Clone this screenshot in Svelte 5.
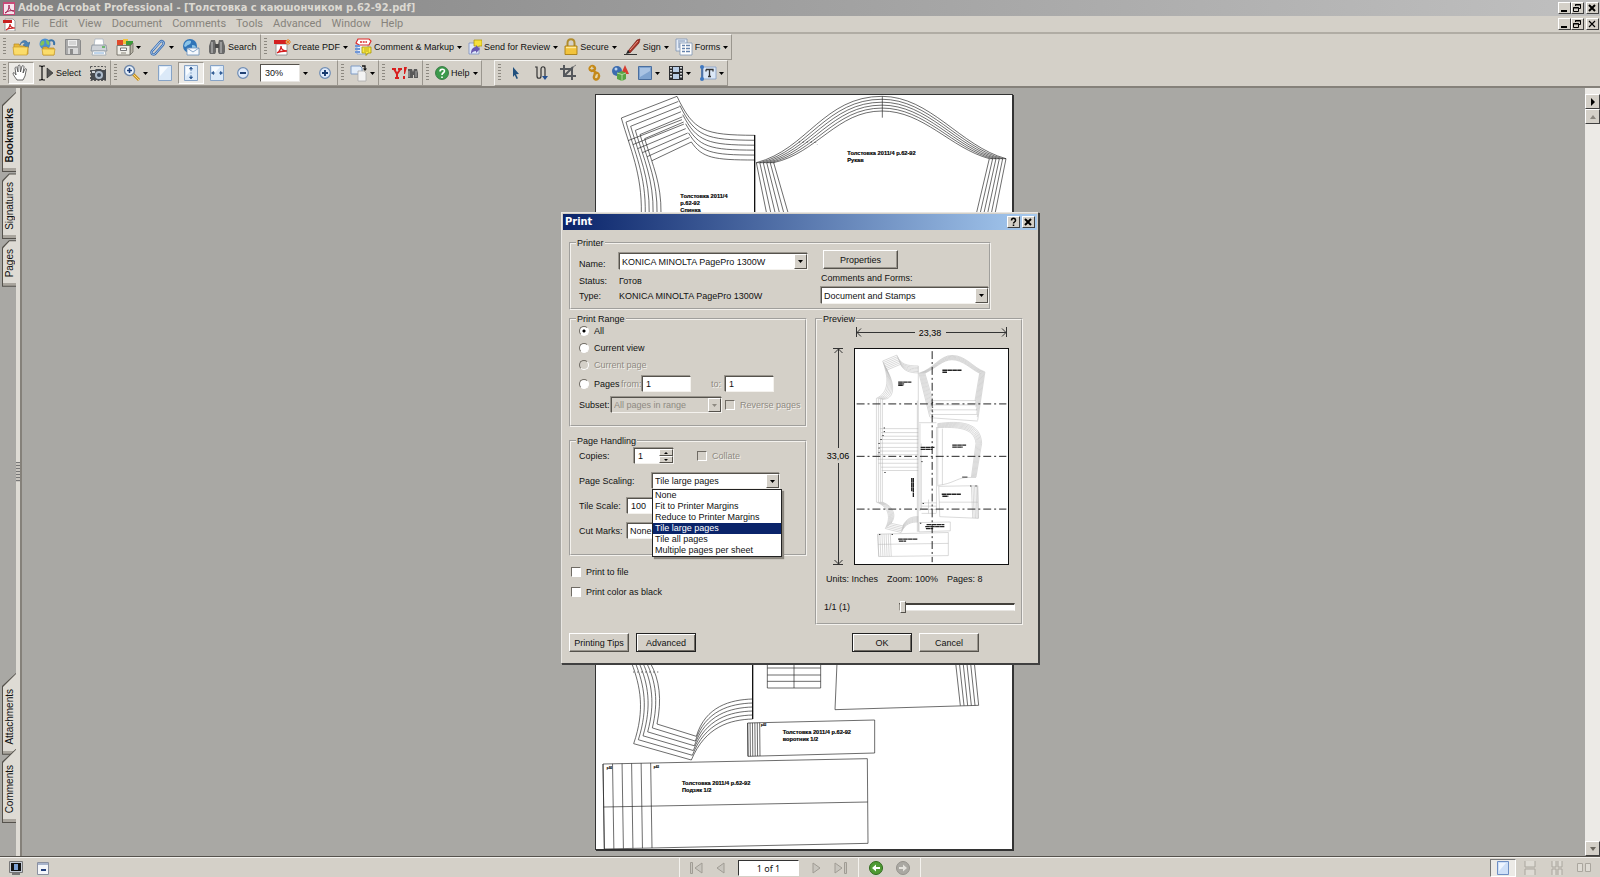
<script lang="ts">
  type Point = number[];
  type Tool = { icon: string; label?: string; menu?: boolean; pressed?: boolean; w?: number; zoom?: boolean };

  const menus = ['File', 'Edit', 'View', 'Document', 'Comments', 'Tools', 'Advanced', 'Window', 'Help'];

  const fileBars: Tool[][] = [
    [
      { icon: 'open' },
      { icon: 'openweb' },
      { icon: 'save' },
      { icon: 'print' },
      { icon: 'organizer', menu: true },
      { icon: 'clip', menu: true },
      { icon: 'mail' },
      { icon: 'search', label: 'Search' },
    ],
    [
      { icon: 'pdf', label: 'Create PDF', menu: true },
      { icon: 'comment', label: 'Comment & Markup', menu: true },
      { icon: 'review', label: 'Send for Review', menu: true, w: 14 },
      { icon: 'lock', label: 'Secure', menu: true, w: 14 },
      { icon: 'pen', label: 'Sign', menu: true },
      { icon: 'forms', label: 'Forms', menu: true },
    ],
  ];

  const viewBars: Tool[][] = [
    [
      { icon: 'hand', pressed: true },
      { icon: 'select', label: 'Select', w: 16 },
      { icon: 'camera' },
    ],
    [
      { icon: 'zoom', menu: true },
      { icon: 'page' },
      { icon: 'fitpage', pressed: true },
      { icon: 'fitwidth' },
      { icon: 'minus' },
      { icon: '', zoom: true, menu: true },
      { icon: 'plus' },
    ],
    [{ icon: 'rotate', menu: true }],
    [{ icon: 'yahoo', w: 28 }],
    [{ icon: 'help', label: 'Help', menu: true, w: 14 }],
    [
      { icon: 'arrow' },
      { icon: 'article' },
      { icon: 'crop' },
      { icon: 'link' },
      { icon: 'shapes' },
      { icon: 'square', menu: true, w: 16 },
      { icon: 'film', menu: true, w: 16 },
      { icon: 'text', menu: true },
    ],
  ];

  const topTabs = ['Bookmarks', 'Signatures', 'Pages'];
  const bottomTabs = ['Attachments', 'Comments'];

  const scalings = [
    'None',
    'Fit to Printer Margins',
    'Reduce to Printer Margins',
    'Tile large pages',
    'Tile all pages',
    'Multiple pages per sheet',
  ];

  let scaling = $state('Tile large pages');
  let range = $state('all');
  let zoom = $state('30%');
  let sheet = $state(0);

  // Pattern sizes: every outline between the largest and the smallest one.
  // Two points make a line, four make a cubic, seven make two joined cubics.
  function grade(a: Point[], b: Point[], steps = 6) {
    let d = '';
    for (let i = 0; i < steps; i++) {
      const t = i / (steps - 1);
      const p = a.map(([x, y], k) => `${(x + (b[k][0] - x) * t).toFixed(1)} ${(y + (b[k][1] - y) * t).toFixed(1)}`);
      d += `M${p[0]}${p.length === 2 ? 'L' : 'C'}${p.slice(1).join(' ')}`;
    }
    return d;
  }

  const pageLines = [
    // front, shoulder and neck
    grade([[93, 85], [260, 20]], [[163, 147], [280, 97]]),
    grade([[113, 153], [275, 90]], [[185, 213], [303, 157]]),
    grade([[93, 85], [120, 180], [155, 250], [153, 372]], [[163, 147], [188, 230], [213, 280], [212, 372]]),
    grade([[260, 20], [310, 125], [340, 136], [493, 137]], [[303, 157], [335, 205], [370, 211], [493, 211]]),
    // sleeve
    grade(
      [[498, 219], [650, 180], [700, 20], [875, 20], [1020, 20], [1110, 170], [1247, 207]],
      [[550, 219], [680, 190], [740, 64], [875, 64], [1000, 64], [1080, 175], [1197, 207]],
    ),
    grade([[498, 219], [529, 372]], [[550, 219], [594, 372]]),
    grade([[1247, 207], [1214, 372]], [[1197, 207], [1158, 372]]),
    'M498 219H552M1197 207H1247M876 20V84',
    // lower armhole and neck
    grade([[124, 1720], [150, 1790], [165, 1860], [130, 1962]], [[180, 1720], [208, 1770], [215, 1830], [200, 1903]]),
    grade([[130, 1962], [303, 2011]], [[200, 1903], [318, 1940]]),
    grade([[303, 2011], [345, 1910], [420, 1890], [487, 1888]], [[318, 1940], [345, 1850], [420, 1830], [487, 1828]]),
    // small grid and hood edge
    'M531 1720V1795H691V1720M531 1735H691M531 1756H691M531 1775H691M611 1720V1795',
    'M740 1720L734 1860 1165 1847',
    grade([[1096, 1720], [1110, 1848]], [[1152, 1720], [1165, 1847]]),
    // collar
    'M472 1900L853 1891V1990L473 2000Z',
    grade([[472, 1900], [473, 2000]], [[508, 1899], [509, 1999]]),
    // facing
    'M38 2023L831 2007 833 2261 42 2278ZM40 2152L832 2137',
    grade([[38, 2023], [42, 2278]], [[181, 2020], [185, 2275]]),
  ];

  const previewLines = [
    grade([[247, 450], [290, 432]], [[258, 478], [301, 460]], 7),
    grade([[290, 432], [300, 460], [320, 465], [355, 465]], [[301, 460], [310, 480], [330, 486], [355, 486]]),
    grade([[247, 450], [265, 500], [268, 545], [228, 563]], [[260, 478], [285, 520], [285, 568], [245, 566]]),
    grade([[228, 563], [228, 878]], [[246, 566], [246, 878]], 4),
    grade([[228, 878], [262, 890], [275, 920], [255, 958]], [[246, 878], [280, 890], [290, 920], [272, 942]]),
    grade([[255, 958], [303, 970]], [[272, 942], [308, 950]], 5),
    grade([[303, 970], [315, 942], [335, 938], [355, 938]], [[308, 950], [320, 926], [335, 922], [355, 922]]),
    'M238 655H355M242 667H355M242 678H355M240 688H355M238 699H355M236 712H355M232 723H355M230 734H355M232 748H355M234 760H355M242 772H355M244 782H355',
    'M355 465V968M352 570V968',
    grade(
      [[357, 487], [400, 475], [420, 433], [457, 433], [500, 433], [520, 470], [557, 483]],
      [[375, 487], [410, 470], [430, 446], [457, 446], [490, 446], [515, 475], [541, 487]],
    ),
    grade([[357, 487], [390, 620]], [[375, 487], [399, 570]], 7),
    grade([[557, 483], [535, 630]], [[541, 487], [527, 570]], 7),
    'M393 570H530M393 583H532M393 598H533M392 612H534M392 622L535 632M357 637H410',
    'M360 640V905M364 700V900M410 650V910M414 650V830M428 655V825M365 880H410M365 890H410M365 900H410M365 912H410M386 870V912',
    grade([[413, 640], [480, 630], [545, 635], [547, 700]], [[413, 652], [470, 650], [525, 650], [530, 700]]),
    grade([[547, 700], [530, 802]], [[530, 700], [516, 802]]),
    'M415 827C460 822 470 806 500 803H530',
    'M417 830L535 828 537 927 420 922ZM418 878H536',
    grade([[516, 829], [520, 926]], [[535, 828], [537, 927]], 5),
    'M357 940L452 938V965L357 968Z',
    'M232 975L446 970V1040L235 1043ZM233 1006L446 1003',
    grade([[232, 975], [235, 1043]], [[270, 974], [273, 1042]], 7),
  ];
</script>

{#snippet icon(name: string, w = 18)}
  <svg class="icon" width={w} height="18" viewBox="0 0 {w} 18" aria-hidden="true">
    {#if name === 'open'}
      <path d="M2 6h5l1 2h8v8H2z" fill="#e9b93a" stroke="#b98a1c" stroke-width=".7" />
      <path d="M8 7c1-5 6-6 8-2l2-1-2 6-5-3 2-1c-1-2-3-2-5 1z" fill="#4a84b8" stroke="#265a8c" stroke-width=".5" />
      <path d="M1 9h15l-1 8H2z" fill="#fbdc6a" stroke="#c99b28" stroke-width=".7" />
    {:else if name === 'openweb'}
      <circle cx="7" cy="6" r="5.5" fill="#4b8fd0" />
      <path d="M3 4c3-3 4 0 3 2s-3 2-4 1zM8 2c3 0 4 3 3 5-2 0-3-2-3-5z" fill="#7fc35b" />
      <path d="M11 3c3-2 6 0 5 4" fill="none" stroke="#3b74a8" stroke-width="2" />
      <path d="M5 9h4l1 1h6v7H5z" fill="#e9b93a" stroke="#b98a1c" stroke-width=".7" />
      <path d="M4 11h13l-1 6H5z" fill="#fbdc6a" stroke="#c99b28" stroke-width=".7" />
    {:else if name === 'save'}
      <path d="M1.500 1.500h14l1 1v14h-15z" fill="#a9a9a9" stroke="#8a8a8a" />
      <path d="M4 2h9v6H4z" fill="#eee" />
      <path d="M5 4h7M5 6h7" stroke="#bbb" />
      <path d="M4 10h10v6H4z" fill="#d8d8d8" />
      <path d="M6 11h3v5H6z" fill="#8c8c8c" />
    {:else if name === 'print'}
      <path d="M5 1h8l1 7H4z" fill="#fff" stroke="#a8b4c0" stroke-width=".8" />
      <path d="M2 7h14l1 6H1z" fill="#cfd3d8" stroke="#87909a" stroke-width=".8" />
      <path d="M3 13h12l1 4H2z" fill="#fff" stroke="#9aa4ae" stroke-width=".8" />
      <path d="M4 15h10" stroke="#7eaad6" /><path d="M12 9h3" stroke="#4fae4f" stroke-width="1.500" />
    {:else if name === 'organizer'}
      <path d="M1 2h6v5H1z" fill="#e04a2a" /><path d="M7 1h5v5H7z" fill="#f3c33a" /><path d="M10 3h7v5h-7z" fill="#3e9a3a" />
      <path d="M14 8l3-3v9l-3 3z" fill="#b8b4a8" stroke="#6f6c62" stroke-width=".8" />
      <path d="M1 7.500h13V17H1z" fill="#efeee8" stroke="#6f6c62" stroke-width=".9" />
      <path d="M4.500 10h6v2.500h-6z" fill="#fff" stroke="#555" stroke-width=".8" /><path d="M5 15h5" stroke="#8a867a" />
    {:else if name === 'clip'}
      <path d="M4 12l7-8c2-2 5 0 3 3l-7 8c-2 3-6 1-4-2l8-9" fill="none" stroke="#3a6db0" stroke-width="2.400" />
      <path d="M4 12l7-8c2-2 5 0 3 3l-7 8c-2 3-6 1-4-2l8-9" fill="none" stroke="#b6d2f2" stroke-width=".8" />
    {:else if name === 'mail'}
      <circle cx="8" cy="8" r="7" fill="#2f74b8" /><path d="M3 5c2-3 5-3 6-2 0 3-1 3-3 4s-2 3-4 1zM10 7c3 0 4 1 4 3h-4z" fill="#8cc4e8" />
      <path d="M5 10h12v7H5z" fill="#f6f9fd" stroke="#6a8fb8" stroke-width=".8" /><path d="M5 10l6 4 6-4" fill="none" stroke="#6a8fb8" stroke-width=".8" />
    {:else if name === 'search'}
      <path d="M3 2h4l1 4v8l-1 2H2l-1-2V8zM11 2h4l2 6v6l-1 2h-5l-1-2V6z" fill="#6a6a6a" /><path d="M7 6h4v4H7z" fill="#4a4a4a" />
      <path d="M4 4v11M13 4v11" stroke="#b4b4b4" stroke-width="1.300" />
    {:else if name === 'pdf'}
      <path d="M3 6h11v11H3z" fill="#fff" stroke="#888" stroke-width=".8" /><path d="M1 2h12v4H1z" fill="#d42020" />
      <path d="M4 15c3-2 4-5 4-7 0 4 3 5 6 5-4 0-7 0-10 2z" fill="none" stroke="#d42020" stroke-width="1.300" />
      <path d="M15 1v6M12 4h6M13 2l4 4M17 2l-4 4" stroke="#e87c24" />
    {:else if name === 'comment'}
      <path d="M3 3h11v13H3z" fill="#e9f0fa" stroke="#7e9fd0" stroke-width=".8" />
      <path d="M4 1h11l2 2-2 4H5L2 5z" fill="#fff" stroke="#dd2b2b" stroke-width="1.200" />
      <path d="M6 4h7" stroke="#dd2b2b" stroke-width="1.500" stroke-dasharray="2 .7" /><path d="M1 8h5M1 11h5M1 14h5" stroke="#6f96d8" stroke-width="2" />
      <path d="M8 9h9v6h-3l-2 2.500V15H8z" fill="#f7e94a" stroke="#a99400" stroke-width=".8" /><path d="M10 11h5M10 13h5" stroke="#a99400" stroke-width=".7" />
    {:else if name === 'review'}
      <path d="M1 5h10v11H1z" fill="#dfe8f8" stroke="#7b8fc0" stroke-width=".8" /><path d="M6 2h8v6h-3l-3 2V8H6z" fill="#f6e03a" stroke="#a99400" stroke-width=".7" />
      <path d="M3 16c0-5 2-7 5-7V7l4 4-4 4v-2c-2 0-4 1-5 3z" fill="#6a5bb0" />
    {:else if name === 'lock'}
      <path d="M3.500 8V5c0-5 7-5 7 0v3" fill="none" stroke="#b08c2c" stroke-width="2" />
      <path d="M1 8h12v8.500H1z" fill="#f2c33c" stroke="#a87d14" stroke-width=".9" /><path d="M2 9.500h10" stroke="#fdeaa0" stroke-width="1.400" />
    {:else if name === 'pen'}
      <path d="M5 13L14 2l3-1-1 4-9 10z" fill="#a83226" stroke="#6d1a12" stroke-width=".6" /><path d="M7 12l8-9" stroke="#e49a8c" />
      <path d="M5 12l2 3-4 1z" fill="#222" /><path d="M1 16.500h13" stroke="#333" />
    {:else if name === 'forms'}
      <path d="M1 1h11v12H1z" fill="#e6edf7" stroke="#7f94b4" stroke-width=".8" /><path d="M5 5h12v12H5z" fill="#fff" stroke="#7f94b4" stroke-width=".8" />
      <path d="M3 3h7M3 5h2M3 7h2M3 9h2" stroke="#7f94b4" /><path d="M7 7.500h3M11 7.500h4M7 10.500h3M11 10.500h4M7 13.500h3M11 13.500h4" stroke="#6784ad" stroke-width="1.300" />
    {:else if name === 'hand'}
      <path d="M5 16C3 13 1 11 1 9c1-1 2 0 3 2L3 4c1-2 2-1 2 0l1 4V2c1-1.500 2-1 2 0l.5 6L10 2c1-1 2 0 2 1l-1 6 2-4c1-1 2 0 1 2l-1 5-2 4z" fill="#fff" stroke="#444" stroke-width=".8" />
    {:else if name === 'select'}
      <path d="M1 2h2l1 1 1-1h2M4 3v12M1 16h2l1-1 1 1h2" fill="none" stroke="#111" stroke-width="1.200" /><path d="M9 4v10l6-5z" fill="#555" stroke="#222" stroke-width=".6" />
    {:else if name === 'camera'}
      <path d="M1.500 2.500h15v14h-15z" fill="none" stroke="#555" stroke-dasharray="2 1.500" /><path d="M2 6h4l1-1h5l1 1h4v10H2z" fill="#474b50" />
      <circle cx="10" cy="11" r="4" fill="#aebccb" /><circle cx="10" cy="11" r="2" fill="#39475a" /><path d="M3 7h3v2H3z" fill="#cfd4d9" />
    {:else if name === 'zoom'}
      <path d="M9 9l7 7" stroke="#c99020" stroke-width="3" /><path d="M9 9l7 7" stroke="#f8dd7a" />
      <circle cx="6.500" cy="6.500" r="5" fill="#e8f1fb" stroke="#6d86a8" stroke-width="1.400" /><path d="M6.500 4v5M4 6.500h5" stroke="#1a3c78" stroke-width="1.600" />
    {:else if name === 'page' || name === 'fitpage' || name === 'fitwidth'}
      <path d="M2.500 1.500h13v15h-13z" fill="#dbe9f8" stroke="#86a3c6" /><path d="M4 3h8L4 12z" fill="#f7fbff" />
      {#if name === 'fitpage'}<path d="M9 3l1.500 2h-3zM9 15l1.500-2h-3zM9 5v2M9 11v2M9 8.500v1" fill="#2a5590" stroke="#2a5590" stroke-width=".8" />{/if}
      {#if name === 'fitwidth'}<path d="M3.500 9l2-1.500v3zM14.500 9l-2-1.500v3zM5 9h2M11 9h2" fill="#2a5590" stroke="#2a5590" stroke-width=".8" />{/if}
    {:else if name === 'minus' || name === 'plus'}
      <circle cx="9" cy="9" r="5.300" fill="#dfeafa" stroke="#6f8db5" stroke-width="1.200" /><path d={name === 'plus' ? 'M9 6v6M6 9h6' : 'M6 9h6'} stroke="#16396f" stroke-width="1.900" />
    {:else if name === 'rotate'}
      <path d="M1 2h9l2 2v6H1z" fill="#e2ecf8" stroke="#7f9bc4" /><path d="M8 7h6l2 2v8H8z" fill="#f3f3f3" stroke="#aaa" stroke-width=".8" />
      <path d="M12 2h3v3" fill="none" stroke="#111" stroke-width="1.300" /><path d="M13 4.500h4L15 7z" fill="#111" />
    {:else if name === 'yahoo'}
      <path d="M1 5h4M7 5h4M3 5l3 5v4M9.500 5L6 10M4 14h4" fill="none" stroke="#d81e1e" stroke-width="2" /><path d="M13 3h3l-2 7h-1zM12 12h2v3h-2z" fill="#d81e1e" />
      <path d="M17 5h4l1 3 1-3h3l1 4v5h-4v-3h-1v3h-5V9z" fill="#5a5a5a" /><path d="M18 7v6M25 7v6" stroke="#aaa" />
    {:else if name === 'help'}
      <circle cx="7" cy="9" r="6.500" fill="#3c9a4c" stroke="#2a6f38" stroke-width=".8" /><path d="M5 7.500c0-3 4.500-3 4.500-.5 0 2-2.500 1.500-2.500 4M7 12.500v1.500" fill="none" stroke="#fff" stroke-width="1.600" />
    {:else if name === 'arrow'}
      <path d="M6 3l6 7-3 .2 2 4-1.500.8-1.800-4L6 13z" fill="#1f4f7d" />
    {:else if name === 'article'}
      <path d="M2 3h2v9c0 3 4 3 4 0V5c0-3 4-3 4 0v8" fill="none" stroke="#333" stroke-width="1.200" /><path d="M9 12h6l-3 4z" fill="#234f90" />
    {:else if name === 'crop'}
      <path d="M1 5h12v11M5 1v11h12M6 11l8-8" fill="none" stroke="#55585c" stroke-width="2" /><path d="M14 3l3-2" stroke="#777" />
    {:else if name === 'link'}
      <path d="M6 2.500c2-1.500 5 1 3.500 3.500l-3 1C4 6 4 4 6 2.500zM8 6l4 4" fill="none" stroke="#c4891a" stroke-width="2.400" /><path d="M10 9c3-1 5 2 3.500 5-2 3-6 1-4-3z" fill="none" stroke="#c4891a" stroke-width="2.400" /><path d="M7 2.500L5.500 5M12.500 10l-2 4" stroke="#fbe08a" />
    {:else if name === 'shapes'}
      <circle cx="6" cy="7" r="5" fill="#3c6cae" /><circle cx="5" cy="5" r="1.500" fill="#b9d3f0" /><path d="M14 1l4 9h-8z" fill="#d83c30" />
      <path d="M6 9l5-2 4 2v6l-4 2-5-2z" fill="#58a444" /><path d="M6 9l5 1.500V17M11 10.500L15 9" fill="none" stroke="#c8e6b8" stroke-width=".8" />
    {:else if name === 'square'}
      <path d="M1.500 2.500h13v13h-13z" fill="#7fa3cf" stroke="#4a6e9e" /><path d="M3 4h10v3L3 13z" fill="#a9c3e3" />
    {:else if name === 'film'}
      <path d="M1 2h14v14H1z" fill="#2b2d30" /><path d="M5 3h6v5H5zM5 10h6v5H5z" fill="#b8cce4" /><path d="M3 3v12M13 3v12" stroke="#fff" stroke-width="1.600" stroke-dasharray="1.500 1.500" />
    {:else if name === 'text'}
      <path d="M4 3h13v12H4z" fill="#dbe7f6" stroke="#7f9bc4" stroke-width=".8" /><path d="M3 2v14" stroke="#24569c" stroke-width="1.400" /><circle cx="3" cy="3" r="2" fill="#3f78c0" /><circle cx="3" cy="15" r="2" fill="#3f78c0" />
      <path d="M7 5.500h7v2M7 7.500v-2M10.500 5.500v7M9 12.500h3" fill="none" stroke="#333" stroke-width="1.300" />
    {/if}
  </svg>
{/snippet}

{#snippet caret()}
  <svg class="caret" width="5" height="3" viewBox="0 0 5 3" aria-hidden="true"><path d="M0 0h5L2.500 3z" /></svg>
{/snippet}

{#snippet winIcon(kind: string)}
  <svg width="11" height="10" viewBox="0 0 11 10" aria-hidden="true">
    {#if kind === 'min'}
      <path d="M2 8h6" stroke="#000" stroke-width="2" />
    {:else if kind === 'restore'}
      <path d="M3.500 3V1.500h5v4H7M3 2h6M1.500 4.500h5v4h-5zM1 5h6" fill="none" stroke="#000" />
    {:else if kind === 'help'}
      <path d="M3.500 3.500c0-3 4-3 4 0 0 1.500-2 1.500-2 3M5.500 7.500V9" fill="none" stroke="#000" stroke-width="1.500" />
    {:else}
      <path d="M2 2l6 6M8 2L2 8" stroke="#000" stroke-width={kind === 'thin' ? 1.200 : 2} />
    {/if}
  </svg>
{/snippet}

{#snippet bar(tools: Tool[], tight = false)}
  <div class="bar" role="toolbar">
    <span class="grip"></span>
    <div class="tools" class:tight>
      {#each tools as tool}
        {#if tool.zoom}
          <span class="zoombox">
            <input aria-label="Zoom" bind:value={zoom} />
            <button class="tool" aria-label="Zoom levels">{@render caret()}</button>
          </span>
        {:else}
          <button class="tool" class:pressed={tool.pressed} aria-label={tool.label ?? tool.icon}>
            {@render icon(tool.icon, tool.w)}
            {#if tool.label}<span class="label">{tool.label}</span>{/if}
            {#if tool.menu}{@render caret()}{/if}
          </button>
        {/if}
      {/each}
    </div>
  </div>
{/snippet}

{#snippet tab(name: string, active = false)}
  <button class="tab" class:active>
    <span class="face"><span class="name">{name}</span></span>
  </button>
{/snippet}

{#snippet drop()}
  <span class="drop">{@render caret()}</span>
{/snippet}

<div class="app">
  <header class="titlebar">
    <svg width="12" height="13" viewBox="0 0 12 13" aria-hidden="true">
      <path d="M0 0h12v13H0z" fill="#c84a78" /><path d="M1 2h10v10H1z" fill="#f4e4ec" /><path d="M2 11c4-2 4-6 4-8 0 4 2 6 5 6-4-1-6 0-9 2z" fill="none" stroke="#a02050" />
    </svg>
    <h1>Adobe Acrobat Professional - [Толстовка с каюшончиком р.62-92.pdf]</h1>
    <div class="winbtns">
      <button aria-label="Minimize">{@render winIcon('min')}</button>
      <button aria-label="Restore">{@render winIcon('restore')}</button>
      <button class="close" aria-label="Close">{@render winIcon('close')}</button>
    </div>
  </header>

  <nav class="menubar">
    <svg width="13" height="13" viewBox="0 0 13 13" aria-hidden="true">
      <path d="M2 1h8l2 2v10H2z" fill="#fff" stroke="#888" stroke-width=".8" /><path d="M0 2h9v3H0z" fill="#c81e1e" /><path d="M3 12c4-2 4-4 4-6 0 3 2 4 5 4-4 0-6 0-9 2z" fill="none" stroke="#c81e1e" stroke-width="1.200" />
    </svg>
    {#each menus as menu}
      <button class="menu">{menu}</button>
    {/each}
    <div class="winbtns">
      <button aria-label="Minimize document">{@render winIcon('min')}</button>
      <button aria-label="Restore document">{@render winIcon('restore')}</button>
      <button class="close" aria-label="Close document">{@render winIcon('thin')}</button>
    </div>
  </nav>

  <div class="bars">
    {#each fileBars as tools, i}{@render bar(tools, i === 1)}{/each}
  </div>
  <div class="bars views">
    {#each viewBars as tools}{@render bar(tools)}{/each}
  </div>

  <main class="workspace">
    <aside class="rail">
      <div>
        {#each topTabs as name, i}{@render tab(name, i === 0)}{/each}
      </div>
      <div class="lower">
        {#each bottomTabs as name}{@render tab(name)}{/each}
      </div>
    </aside>
    <div class="splitter"><span></span></div>

    <section class="canvas">
      <svg class="sheet" width="418" height="756" viewBox="14 13 1254 2268">
        {#each pageLines as d}<path {d} />{/each}
        <path d="M493 136V372M487 1720V1888" class="heavy" />
        <path d="M625 157H675L682 166M128 1747H206" class="dots" />
        <text x="270" y="324">Толстовка 2011/4<tspan x="270" dy="22">р.62-92</tspan><tspan x="270" dy="22">Спинка</tspan></text>
        <text x="771" y="195">Толстовка 2011/4 р.62-92<tspan x="771" dy="22">Рукав</tspan></text>
        <text x="577" y="1933">Толстовка 2011/4 р.62-92<tspan x="577" dy="22">воротник 1/2</tspan></text>
        <text x="275" y="2085">Толстовка 2011/4 р.62-92<tspan x="275" dy="22">Подзяк 1/2</tspan></text>
        <text x="512" y="1908" class="tiny">р.62</text>
        <text x="49" y="2039" class="tiny">р.92</text>
        <text x="190" y="2035" class="tiny">р.62</text>
      </svg>
    </section>

    <div class="scrollbar">
      <span class="nub"></span>
      <button aria-label="Show how-to"><svg width="6" height="8" viewBox="0 0 6 8"><path d="M1 0v8l4-4z" /></svg></button>
      <button aria-label="Scroll up"><svg width="6" height="4" viewBox="0 0 6 4"><path d="M0 4h6L3 0z" fill="#8a867e" /></svg></button>
      <span class="track"></span>
      <button aria-label="Scroll down"><svg width="6" height="4" viewBox="0 0 6 4"><path d="M0 0h6L3 4z" fill="#6a665e" /></svg></button>
    </div>

    <div class="dialog" role="dialog" aria-labelledby="print-title">
      <div class="caption">
        <h2 id="print-title">Print</h2>
        <div class="winbtns">
          <button aria-label="Help">{@render winIcon('help')}</button>
          <button class="close" aria-label="Close dialog">{@render winIcon('close')}</button>
        </div>
      </div>

      <form class="body" onsubmit={(e) => e.preventDefault()}>
        <fieldset class="printer">
          <legend>Printer</legend>
          <div class="details">
            <label for="printer">Name:</label>
            <span class="combo">
              <select id="printer"><option>KONICA MINOLTA PagePro 1300W</option></select>
              {@render drop()}
            </span>
            <span>Status:</span><span>Готов</span>
            <span>Type:</span><span>KONICA MINOLTA PagePro 1300W</span>
          </div>
          <div class="extras">
            <button type="button" class="btn wide">Properties</button>
            <label for="forms">Comments and Forms:</label>
            <span class="combo">
              <select id="forms"><option>Document and Stamps</option></select>
              {@render drop()}
            </span>
          </div>
        </fieldset>

        <div class="columns">
          <div class="left">
            <fieldset class="range">
              <legend>Print Range</legend>
              <label class="choice"><input type="radio" name="range" value="all" bind:group={range} />All</label>
              <label class="choice"><input type="radio" name="range" value="view" bind:group={range} />Current view</label>
              <label class="choice off"><input type="radio" name="range" value="page" bind:group={range} disabled />Current page</label>
              <div class="line">
                <label class="choice pages-from"><input type="radio" name="range" value="pages" bind:group={range} />Pages</label>
                <label class="off from" for="from">from:</label>
                <input id="from" class="field num" value="1" />
                <label class="off to" for="to">to:</label>
                <input id="to" class="field num" value="1" />
              </div>
              <div class="line subset">
                <label for="subset">Subset:</label>
                <span class="combo off">
                  <select id="subset" disabled><option>All pages in range</option></select>
                  {@render drop()}
                </span>
                <label class="choice off"><input type="checkbox" disabled />Reverse pages</label>
              </div>
            </fieldset>

            <fieldset class="handling">
              <legend>Page Handling</legend>
              <div class="line">
                <label class="w-copies" for="copies">Copies:</label>
                <span class="spin field">
                  <input id="copies" value="1" />
                  <span class="steps">
                    <button type="button" aria-label="More copies"><svg width="4" height="2" viewBox="0 0 4 2"><path d="M0 2h4L2 0z" /></svg></button>
                    <button type="button" aria-label="Fewer copies"><svg width="4" height="2" viewBox="0 0 4 2"><path d="M0 0h4L2 2z" /></svg></button>
                  </span>
                </span>
                <label class="choice off collate"><input type="checkbox" disabled />Collate</label>
              </div>
              <div class="line">
                <label class="w-scaling" for="scaling">Page Scaling:</label>
                <span class="combo scaling">
                  <select id="scaling" bind:value={scaling}>
                    {#each scalings as s}<option>{s}</option>{/each}
                  </select>
                  {@render drop()}
                  <ul class="options">
                    {#each scalings as s}
                      <li><button type="button" class:chosen={s === scaling} onclick={() => (scaling = s)}>{s}</button></li>
                    {/each}
                  </ul>
                </span>
              </div>
              <div class="line">
                <label class="w-tile" for="tile">Tile Scale:</label>
                <input id="tile" class="field num" value="100" />
              </div>
              <div class="line">
                <label class="w-tile" for="marks">Cut Marks:</label>
                <span class="combo marks">
                  <select id="marks"><option>None</option></select>
                  {@render drop()}
                </span>
              </div>
            </fieldset>

            <div class="outputs">
              <label class="choice"><input type="checkbox" />Print to file</label>
              <label class="choice"><input type="checkbox" />Print color as black</label>
            </div>
          </div>

          <fieldset class="preview">
            <legend>Preview</legend>
            <svg class="across" width="155" height="16" viewBox="0 0 155 16">
              <path d="M2.500 2v10M152.500 2v10M3 7.500h58M92 7.500h60M7 3.500l-4 4 4 4M148 3.500l4 4-4 4" />
              <text x="76" y="11">23,38</text>
            </svg>
            <svg class="down" width="32" height="217" viewBox="0 0 32 217">
              <path d="M11 .5h10M11 216.500h10M16.500 1v99M16.500 115v101M12.500 5l4-4 4 4M12.500 212l4 4 4-4" />
              <text x="16" y="111">33,06</text>
            </svg>
            <svg class="thumb" width="155" height="217" viewBox="163 414 464 651">
              {#each previewLines as d}<path {d} />{/each}
              <path class="blot" d="M294 514H334M294 519H312M294 524H310M428 478H486M428 484H442M362 712H404M362 718H398M458 705H500M458 711H490M426 854H484M428 860H446M376 952H434M380 946H434M378 958H400M294 990H352M296 996H318M340 805V862M335 805V845" />
              <path class="specks" d="M250 653h4M250 664h4M246 676h4M240 688h4M234 700h4M234 714h4M234 728h4M252 788h4M396 576h4M396 590h4M396 604h4M396 618h4M364 755h4M368 882h4M236 976h4M274 976h4M360 942h4M512 829h4M528 829h4M488 802h16" />
              <path class="cuts" d="M397 420V1060M168 580H622M168 739H622M168 899H622" />
            </svg>
            <div class="facts"><span>Units: Inches</span><span>Zoom: 100%</span><span>Pages: 8</span></div>
            <div class="pager">
              <label for="sheet">1/1 (1)</label>
              <input id="sheet" type="range" min="0" max="7" bind:value={sheet} />
            </div>
          </fieldset>
        </div>

        <div class="footer">
          <button type="button" class="btn">Printing Tips</button>
          <button type="button" class="btn default">Advanced</button>
          <button class="btn default ok">OK</button>
          <button type="button" class="btn">Cancel</button>
        </div>
      </form>
    </div>
  </main>

  <footer class="status">
    <div class="side">
      <svg width="14" height="14" viewBox="0 0 14 14" aria-hidden="true"><path d="M.5.5h13v11H.5z" fill="#c4cbd6" stroke="#777" /><path d="M2 2h10v8H2z" fill="#111" /><path d="M5 3h4v6H5z" fill="#7aa0d4" /><path d="M3 13h8" stroke="#777" stroke-width="2" /></svg>
      <svg width="14" height="14" viewBox="0 0 14 14" aria-hidden="true"><path d="M1.500 1.500h11v12h-11z" fill="#f4f6fa" stroke="#8a90a0" /><path d="M2 3h10" stroke="#a8b4cc" stroke-width="2" /><path d="M5 9h5" stroke="#24407c" stroke-width="2" /></svg>
    </div>
    <div class="pages">
      <button aria-label="First page"><svg width="13" height="12" viewBox="0 0 13 12"><path d="M.5.500h2v11h-2zM12 1v10L5 6z" fill="#c8c5be" stroke="#a09c94" /></svg></button>
      <button aria-label="Previous page"><svg width="13" height="12" viewBox="0 0 13 12"><path d="M10 1v10L3 6z" fill="#c8c5be" stroke="#a09c94" /></svg></button>
      <input aria-label="Page" value="1 of 1" />
      <button aria-label="Next page"><svg width="13" height="12" viewBox="0 0 13 12"><path d="M3 1v10l7-5z" fill="#c8c5be" stroke="#a09c94" /></svg></button>
      <button aria-label="Last page"><svg width="13" height="12" viewBox="0 0 13 12"><path d="M10.500.500h2v11h-2zM1 1v10l7-5z" fill="#c8c5be" stroke="#a09c94" /></svg></button>
      <div class="history">
        <button aria-label="Previous view"><svg width="14" height="14" viewBox="0 0 14 14"><circle cx="7" cy="7" r="6.500" fill="#4f9a34" stroke="#2f6a1c" /><path d="M3 7l4-3.500V6h4v2H7v2.500z" fill="#fff" /></svg></button>
        <button aria-label="Next view"><svg width="14" height="14" viewBox="0 0 14 14"><circle cx="7" cy="7" r="6.500" fill="#aaa8a2" stroke="#94928c" /><path d="M11 7L7 3.500V6H3v2h4v2.500z" fill="#e4e2dc" /></svg></button>
      </div>
    </div>
    <div class="layouts">
      <button class="on" aria-label="Single page"><svg width="14" height="14" viewBox="0 0 14 14"><path d="M1.500.500h11v13h-11z" fill="#cfe0f8" stroke="#6f8fc4" /><path d="M3 2h7l-7 8z" fill="#eef5ff" /></svg></button>
      <button aria-label="Continuous"><svg width="14" height="14" viewBox="0 0 14 14"><path d="M2 0v6h10V0M2 14V8h10v6" fill="#dedbd4" stroke="#aaa69e" /></svg></button>
      <button aria-label="Continuous facing"><svg width="14" height="14" viewBox="0 0 14 14"><path d="M2 0v6h4V0M8 0v6h4V0M2 14V8h4v6M8 14V8h4v6" fill="#dedbd4" stroke="#aaa69e" /></svg></button>
      <button aria-label="Facing"><svg width="14" height="14" viewBox="0 0 14 14"><path d="M.5 2.500h5v8h-5zM8.500 2.500h5v8h-5z" fill="#dedbd4" stroke="#aaa69e" /></svg></button>
    </div>
  </footer>
</div>

<style>
  :global(body) {
    margin: 0;
  }

  .app {
    --face: #d4d0c8;
    --shade: #85817a;
    --grey: #a9a8a4;
    display: flex;
    flex-direction: column;
    min-height: 100vh;
    background: var(--face);
    color: #111;
    font: 9px/12px 'Liberation Sans', sans-serif;
    white-space: nowrap;
  }

  button, input, select {
    box-sizing: border-box;
    margin: 0;
    padding: 0;
    border: 0;
    border-radius: 0;
    background: none;
    color: inherit;
    font: inherit;
  }

  svg {
    display: block;
    flex: none;
  }

  /* window frame */
  .titlebar {
    display: flex;
    align-items: center;
    height: 16px;
    padding: 0 1px 0 3px;
    gap: 3px;
    background: linear-gradient(90deg, #808080, #c0c0c0);
  }

  h1, h2 {
    margin: 0;
    flex: 1;
    font: bold 11px/16px 'DejaVu Sans Condensed', 'DejaVu Sans', sans-serif;
  }

  h1 {
    color: #dcd9d2;
  }

  .winbtns {
    display: flex;
    margin-left: auto;
  }

  .winbtns button,
  .scrollbar button {
    display: grid;
    place-items: center;
    width: 13px;
    height: 12px;
    background: var(--face);
    border: 1px solid;
    border-color: #fff #404040 #404040 #fff;
  }

  .winbtns .close {
    margin-left: 2px;
  }

  .menubar {
    display: flex;
    align-items: center;
    height: 16px;
    padding: 0 1px 0 3px;
    gap: 10px;
    border-bottom: 2px solid #b0aca4;
    color: #86837c;
    font: 11px/16px Roboto, sans-serif;
  }

  .menubar svg {
    margin-right: -4px;
  }

  .menubar .winbtns svg {
    margin: 0;
  }

  /* toolbars */
  .bars {
    display: flex;
    height: 26px;
  }

  .views {
    border-bottom: 2px solid var(--shade);
  }

  .bar {
    box-sizing: border-box;
    display: flex;
    align-items: center;
    padding: 0 3px;
    border: 1px solid;
    border-color: #f6f5f2 #9a968e #9a968e #f6f5f2;
    border-left-width: 0;
  }

  .bar:last-child:nth-child(6) {
    margin-left: 12px;
    border-left-width: 1px;
  }

  .grip {
    width: 3px;
    height: 18px;
    margin-right: 6px;
    background: repeating-linear-gradient(#8c8880 0 1px, transparent 1px 3px);
  }

  .tools {
    display: flex;
    align-items: center;
    gap: 8px;
  }

  .tools.tight {
    gap: 6px;
  }

  .tool {
    display: flex;
    align-items: center;
    gap: 2px;
    height: 22px;
  }

  .label + .caret {
    margin-left: 1px;
  }

  .tool.pressed {
    margin: 0 -4px;
    padding: 0 3px;
    background: #eceae6;
    border: 1px solid;
    border-color: #9a968e #fff #fff #9a968e;
  }

  .zoombox {
    display: flex;
    gap: 3px;
  }

  .zoombox input {
    width: 40px;
    height: 18px;
    margin: 2px 0;
    padding-left: 4px;
    background: #fff;
    border: 1px solid;
    border-color: #55524c #e8e6e2 #e8e6e2 #55524c;
  }

  /* workspace */
  .workspace {
    position: relative;
    flex: 1;
    display: flex;
    background: var(--grey);
    border-bottom: 1px solid #55524c;
  }

  .rail {
    box-sizing: border-box;
    display: flex;
    flex-direction: column;
    justify-content: space-between;
    width: 16px;
    padding: 4px 0 33px 2px;
  }

  .rail div {
    display: flex;
    flex-direction: column;
    gap: 1px;
  }

  .tab {
    display: flex;
    width: 14px;
    background: #55524c;
    padding: 1px 0 1px 1px;
    clip-path: polygon(100% 0, 100% 100%, 0 100%, 0 13px);
  }

  .tab + .tab,
  .rail .tab:nth-child(n + 2) {
    clip-path: polygon(50% 0, 100% 0, 100% 100%, 0 100%, 0 7px);
  }

  .rail .lower .tab:nth-child(n) {
    clip-path: polygon(100% 0, 100% 100%, 0 100%, 0 13px);
  }

  .lower .tab + .tab {
    margin-top: -7px;
  }

  .face {
    box-sizing: border-box;
    width: 13px;
    padding: 8px 0;
    background: linear-gradient(0deg, #aaa69e 3px, #dedbd4 3px);
    clip-path: inherit;
  }

  .active .face,
  .lower .face {
    padding: 15px 0 9px;
  }

  .name {
    display: block;
    writing-mode: vertical-rl;
    transform: rotate(180deg);
    line-height: 14px;
    font-size: 10px;
  }

  .active .name {
    font-weight: bold;
  }

  .splitter {
    display: grid;
    align-content: center;
    width: 4px;
    background: #dedbd4;
    border-right: 2px solid var(--shade);
  }

  .splitter span {
    height: 20px;
    background: repeating-linear-gradient(#777 0 1px, #c8c5be 1px 3px);
  }

  .canvas {
    flex: 1;
    display: flex;
    justify-content: center;
    align-items: flex-start;
    padding: 6px 0;
  }

  .sheet {
    background: #fff;
    box-shadow: inset 0 0 0 1px #333, 1px 1px 0 #333;
  }

  .sheet path {
    fill: none;
    stroke: #222;
    stroke-width: 2;
  }

  .sheet .heavy {
    stroke: #111;
    stroke-width: 4;
  }

  .sheet .dots {
    stroke-dasharray: 4 8;
  }

  .sheet text {
    font-size: 17px;
    font-weight: bold;
    stroke: #000;
    stroke-width: 0.5px;
  }

  .sheet .tiny {
    font-size: 8px;
  }

  .scrollbar {
    display: flex;
    flex-direction: column;
    width: 15px;
    background: #eceae6;
  }

  .scrollbar button {
    width: 15px;
    height: 15px;
  }

  .nub {
    height: 6px;
  }

  .track {
    flex: 1;
  }

  /* print dialog, floating over the page */
  .dialog {
    position: absolute;
    top: 124px;
    left: calc(50% - 239px);
    box-sizing: border-box;
    width: 478px;
    padding: 1px;
    background: var(--face);
    border: 1px solid;
    border-color: #e8e6e2 #404040 #404040 #e8e6e2;
    box-shadow: 1px 1px 0 #404040;
  }

  .caption {
    display: flex;
    align-items: center;
    height: 16px;
    padding: 0 2px;
    background: linear-gradient(90deg, #0a246a, #a6caf0);
  }

  h2 {
    color: #fff;
  }

  .body {
    padding: 7px 14px 10px 6px;
  }

  fieldset {
    box-sizing: border-box;
    min-width: 0;
    margin: 0;
    padding: 0 8px;
    border: 2px groove #f4f2ee;
  }

  legend {
    margin-left: -3px;
    padding: 0 1px;
  }

  .printer {
    display: flex;
    justify-content: space-between;
    width: 422px;
    padding: 0 0 4px 8px;
  }

  .details {
    display: grid;
    grid-template-columns: 40px 189px;
    grid-template-rows: 20px 15px 15px;
    align-items: center;
    padding-top: 4px;
  }

  .details .combo {
    height: 17px;
    align-self: start;
  }

  .details label {
    padding-top: 2px;
  }

  .extras {
    display: flex;
    flex-direction: column;
    width: 168px;
    padding-top: 1px;
  }

  .extras label {
    line-height: 18px;
  }

  .combo {
    position: relative;
    display: block;
    flex: none;
    height: 17px;
  }

  .combo select {
    width: 100%;
    height: 100%;
    padding: 0 16px 0 2px;
    appearance: none;
    background: #fff;
    border: 1px solid;
    border-color: #55524c #f4f2ee #f4f2ee #55524c;
    box-shadow: -1px -1px 0 #9a968e;
    opacity: 1;
  }

  .drop {
    position: absolute;
    top: 1px;
    right: 1px;
    bottom: 1px;
    display: grid;
    place-items: center;
    width: 13px;
    background: var(--face);
    border: 1px solid;
    border-color: #fff #55524c #55524c #fff;
    box-sizing: border-box;
    pointer-events: none;
  }

  .off {
    color: #8e8a82;
    text-shadow: 1px 1px 0 #f4f2ee;
  }

  .combo.off select {
    background: var(--face);
  }

  .off .drop {
    fill: #8e8a82;
  }

  .btn {
    width: 60px;
    height: 19px;
    border: 1px solid;
    border-color: #fff #55524c #55524c #fff;
    box-shadow: inset -1px -1px 0 #9a968e;
  }

  .btn.default {
    border-color: #222;
    box-shadow: inset 1px 1px 0 #fff, inset -1px -1px 0 #6f6b64;
  }

  .btn.wide {
    width: 75px;
    margin-left: 2px;
  }

  .columns {
    display: grid;
    grid-template-columns: 238px 208px;
    gap: 8px;
    margin-top: 3px;
  }

  .range,
  .handling {
    display: flex;
    flex-direction: column;
    gap: 5px;
    padding-bottom: 12px;
  }

  .handling {
    gap: 9px;
    margin-top: 8px;
    padding-top: 1px;
    padding-bottom: 15px;
  }

  .line {
    display: flex;
    align-items: center;
    height: 16px;
  }

  .line .combo {
    height: 16px;
  }

  .choice {
    display: flex;
    align-items: center;
    gap: 5px;
    height: 12px;
  }

  [type='radio'],
  [type='checkbox'] {
    appearance: none;
    width: 10px;
    height: 10px;
    background: #fff;
    border: 1px solid;
    border-color: #6f6b64 #fff #fff #6f6b64;
  }

  [type='radio'] {
    border-radius: 50%;
  }

  [type='radio']:checked {
    background: radial-gradient(circle, #000 1px, #fff 2px);
  }

  [type='radio']:disabled,
  [type='checkbox']:disabled {
    background: var(--face);
  }

  .field {
    box-sizing: border-box;
    height: 16px;
    padding-left: 3px;
    background: #fff;
    border: 1px solid;
    border-color: #55524c #f4f2ee #f4f2ee #55524c;
    box-shadow: -1px -1px 0 #9a968e;
  }

  .num {
    width: 49px;
  }

  .pages-from {
    width: 42px;
  }

  .from {
    width: 21px;
  }

  .to {
    margin-left: auto;
    margin-right: 4px;
  }

  .range {
    padding-right: 0;
  }

  .range .line {
    padding-right: 31px;
  }

  .range .subset {
    gap: 3px;
    padding-right: 0;
  }

  .subset > label:first-child {
    width: 29px;
  }

  .subset .combo {
    width: 111px;
  }

  .spin {
    display: flex;
    width: 40px;
  }

  .spin input {
    flex: 1;
    min-width: 0;
  }

  .steps {
    display: grid;
    width: 14px;
  }

  .steps button {
    display: grid;
    place-items: center;
    height: 7px;
    background: var(--face);
    border: 1px solid;
    border-color: #fff #55524c #55524c #fff;
  }

  .w-copies {
    width: 55px;
  }

  .w-scaling {
    width: 73px;
  }

  .w-tile {
    width: 48px;
  }

  .collate {
    margin-left: 23px;
  }

  .scaling {
    width: 128px;
  }

  .marks {
    width: 100px;
  }

  .options {
    position: absolute;
    top: 16px;
    left: 0;
    z-index: 1;
    width: 128px;
    margin: 0;
    padding: 0;
    list-style: none;
    background: #fff;
    border: 1px solid #222;
    box-shadow: 2px 2px 1px #8c8880;
    line-height: 11px;
  }

  .options button {
    display: block;
    width: 100%;
    height: 11px;
    padding-left: 2px;
    text-align: left;
  }

  .options .chosen {
    background: #0a246a;
    color: #fff;
  }

  .outputs {
    display: grid;
    gap: 8px;
    margin-top: 10px;
    padding-left: 2px;
  }

  .preview {
    display: grid;
    grid-template-columns: 32px 155px;
    align-content: start;
    padding: 0 5px 9px;
  }

  .preview legend {
    margin-left: 0;
  }

  .across {
    grid-column: 2;
    margin-bottom: 7px;
  }

  .across path,
  .down path {
    fill: none;
    stroke: #333;
  }

  .across text,
  .down text {
    text-anchor: middle;
    font-size: 9px;
  }

  .thumb {
    box-sizing: border-box;
    background: #fff;
    border: 1px solid #111;
    outline: 1px solid #111;
    outline-offset: -1px;
  }

  .thumb path {
    fill: none;
    stroke: #b4b4b4;
    stroke-width: 1.5;
  }

  .thumb .blot {
    stroke: #222;
    stroke-width: 4;
    stroke-dasharray: 14 1;
  }

  .thumb .specks {
    stroke: #333;
    stroke-width: 3;
  }

  .thumb .cuts {
    stroke: #222;
    stroke-width: 3;
    stroke-dasharray: 24 9 6 9;
  }

  .facts,
  .pager {
    grid-column: 1 / -1;
    display: flex;
    align-items: center;
    gap: 9px;
    margin-top: 8px;
    padding-left: 4px;
  }

  .pager {
    justify-content: space-between;
    height: 14px;
    margin-top: 15px;
    margin-right: -6px;
    padding-left: 2px;
  }

  [type='range'] {
    appearance: none;
    width: 116px;
    height: 12px;
  }

  [type='range']::-webkit-slider-runnable-track {
    box-sizing: border-box;
    height: 8px;
    background: #fff;
    border: 1px solid;
    border-color: #44413c #fff #e8e6e2 #9a968e;
    border-top-width: 2px;
  }

  [type='range']::-webkit-slider-thumb {
    appearance: none;
    box-sizing: border-box;
    width: 6px;
    height: 12px;
    margin-top: -4px;
    background: var(--face);
    border: 1px solid;
    border-color: #fff #55524c #55524c #fff;
  }

  .footer {
    display: flex;
    gap: 7px;
    margin-top: 8px;
    padding-right: 44px;
  }

  .ok {
    margin-left: auto;
  }

  /* status bar */
  .status {
    display: grid;
    grid-template-columns: 1fr auto 1fr;
    align-items: center;
    height: 20px;
    border-top: 1px solid #f4f2ee;
  }

  .side {
    display: flex;
    gap: 13px;
    padding-left: 9px;
  }

  .pages,
  .history {
    display: flex;
    align-items: center;
    height: 20px;
    gap: 13px;
  }

  .pages {
    gap: 11px;
    padding: 0 0 0 10px;
    border: solid #f4f2ee;
    border-width: 0 1px;
  }

  .pages input {
    width: 61px;
    height: 16px;
    background: #fff;
    border: 1px solid;
    border-color: #333 #fff #fff #333;
    text-align: center;
    font: 9px 'Noto Sans', sans-serif;
  }

  .history {
    padding: 0 10px;
    border-left: 1px solid #f4f2ee;
  }

  .layouts {
    display: flex;
    justify-content: flex-end;
    gap: 1px;
    padding-right: 3px;
  }

  .layouts button {
    display: grid;
    place-items: center;
    width: 26px;
    height: 18px;
  }

  .layouts .on {
    background: #eceae6;
    border: 1px solid;
    border-color: #777 #fff #fff #777;
  }
</style>
